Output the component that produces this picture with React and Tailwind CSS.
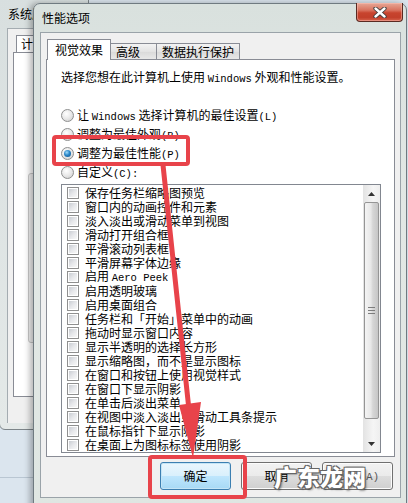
import React from "react";

const M = ({ children }) => (
  <span className="font-['Liberation_Mono',monospace] text-[10.5px]">{children}</span>
);

const items = [
  "保存任务栏缩略图预览",
  "窗口内的动画控件和元素",
  "淡入淡出或滑动菜单到视图",
  "滑动打开组合框",
  "平滑滚动列表框",
  "平滑屏幕字体边缘",
  "AERO",
  "启用透明玻璃",
  "启用桌面组合",
  "任务栏和「开始」菜单中的动画",
  "拖动时显示窗口内容",
  "显示半透明的选择长方形",
  "显示缩略图，而不是显示图标",
  "在窗口和按钮上使用视觉样式",
  "在窗口下显示阴影",
  "在单击后淡出菜单",
  "在视图中淡入淡出或滑动工具条提示",
  "在鼠标指针下显示阴影",
  "在桌面上为图标标签使用阴影",
];

function Radio({ checked, children }) {
  return (
    <div className="h-[19px] flex items-center pl-[14px]">
      <span className="w-[13px] h-[13px] rounded-full border border-[#8e8f8f] bg-[radial-gradient(circle_at_40%_35%,#ffffff_0%,#e8e8e8_50%,#c9c9c9_100%)] flex items-center justify-center shrink-0">
        {checked && (
          <span className="w-[7px] h-[7px] rounded-full bg-[radial-gradient(circle_at_40%_35%,#9fdcfb_0%,#2a86c8_45%,#0b4f86_100%)]" />
        )}
      </span>
      <span className="ml-[3px] leading-[14px]">{children}</span>
    </div>
  );
}

function Check({ children }) {
  return (
    <div className="h-[14px] flex items-center pl-[5px] shrink-0">
      <span className="w-[12px] h-[12px] border border-[#8f8f8f] bg-white p-[1px] shrink-0">
        <span className="block w-full h-full bg-[linear-gradient(135deg,#c9ccd2_0%,#e6e7ea_50%,#f8f8f8_100%)]" />
      </span>
      <span className="ml-[6px] leading-[14px] whitespace-nowrap">{children}</span>
    </div>
  );
}

function Btn({ children, primary }) {
  return (
    <div
      className={
        "w-[71px] h-[28px] rounded-[3px] border flex items-center justify-center " +
        (primary
          ? "border-[#3c7fb1] bg-[linear-gradient(to_bottom,#eaf6fd_0%,#d9f0fc_50%,#bee6fd_51%,#a7d9f5_100%)] shadow-[inset_0_0_0_1px_#c4e5f6]"
          : "border-[#707070] bg-[linear-gradient(to_bottom,#f2f2f2_0%,#ebebeb_50%,#dddddd_51%,#cfcfcf_100%)] shadow-[inset_0_0_0_1px_#fcfcfc]")
      }
    >
      {children}
    </div>
  );
}

export default function App() {
  return (
    <div className="relative w-[408px] h-[503px] overflow-hidden bg-[#dbe5ee] text-[12px] text-black font-['Noto_Sans_CJK_SC',sans-serif]">
      {/* desktop line */}
      <div className="absolute left-0 top-[477px] w-[40px] h-px bg-[#b9c6d2]" />

      {/* background window */}
      <div className="absolute left-[-1px] top-[-6px] w-[90px] h-[436px] rounded-b-[6px] border border-[#7d8589] bg-[linear-gradient(to_bottom,#d8dfdf,#e4e9e8)]">
        <div className="pl-[8px] pt-[12px] leading-[14px]">系统属性</div>
        <div className="absolute left-[7px] top-[33px] right-0 bottom-[6px] bg-[#f0f0f0] border-l border-t border-[#a4acb1]">
          <div className="absolute left-[8px] top-[6px] h-[18px] px-[4px] bg-white border border-b-0 border-[#898c95] leading-[16px]">
            计算机名
          </div>
          <div className="absolute left-[5px] top-[23px] right-0 h-[345px] bg-white border border-[#898c95]">
            <div className="absolute left-[14px] top-[120px] w-[20px] h-[170px] rounded-[3px] border border-[#c9c9c9] bg-[#f2f2f2]" />
          </div>
        </div>
      </div>

      {/* dialog */}
      <div className="absolute left-[33px] top-[3px] w-[374px] h-[510px] rounded-t-[7px] border border-[#6f7a80] bg-[linear-gradient(to_bottom,#d9e1de_0%,#e2e8e5_40%,#dfe6e2_100%)] shadow-[-3px_0_6px_rgba(0,0,0,0.3)] flex flex-col">
        <div className="relative h-[28px] flex items-center pl-[8px] shrink-0">
          <span className="leading-[14px]">性能选项</span>
          <div className="absolute right-[3px] top-[-1px] w-[47px] h-[19px] rounded-b-[4px] border border-t-0 border-[#5a2a22] bg-[linear-gradient(to_bottom,#e7a897_0%,#d9735f_40%,#c8442e_55%,#c23f2a_80%,#d6634c_100%)] flex items-center justify-center shadow-[inset_0_0_0_1px_rgba(255,200,190,0.45)]">
            <svg width="14" height="11" viewBox="0 0 14 11">
              <path d="M2.5 1.5 L11.5 9.5 M11.5 1.5 L2.5 9.5" stroke="#3a3a3a" strokeWidth="4.2" strokeLinecap="round" />
              <path d="M2.5 1.5 L11.5 9.5 M11.5 1.5 L2.5 9.5" stroke="#ffffff" strokeWidth="2.4" strokeLinecap="round" />
            </svg>
          </div>
        </div>

        <div className="ml-[6px] mr-[5px] h-[466px] bg-[#f0f0f0] border border-[#9aa3a9] flex flex-col shrink-0">
          {/* tabs */}
          <div className="mt-[6px] ml-[6px] h-[20px] flex items-end relative z-10">
            <div className="h-[21px] -mb-px px-[7px] bg-white border border-b-0 border-[#898c95] flex items-start pt-[3px] leading-[14px]">
              视觉效果
            </div>
            <div className="h-[16px] w-[46px] pl-[5px] border border-l-0 border-b-0 border-[#898c95] bg-[linear-gradient(to_bottom,#f3f3f3,#e3e3e3_50%,#d9d9d9_51%,#e8e8e8)] leading-[15px]">
              高级
            </div>
            <div className="h-[16px] w-[83px] pl-[5px] border border-l-0 border-b-0 border-[#898c95] bg-[linear-gradient(to_bottom,#f3f3f3,#e3e3e3_50%,#d9d9d9_51%,#e8e8e8)] leading-[15px]">
              数据执行保护
            </div>
          </div>

          {/* panel */}
          <div className="mx-[5px] h-[398px] bg-white border border-[#898c95] flex flex-col">
            <div className="mt-[10px] pl-[14px] leading-[14px] whitespace-nowrap">
              选择您想在此计算机上使用 <M>Windows</M> 外观和性能设置。
            </div>
            <div className="mt-[20px] flex flex-col">
              <Radio>
                让 <M>Windows</M> 选择计算机的最佳设置<M>(L)</M>
              </Radio>
              <Radio>
                调整为最佳外观<M>(B)</M>
              </Radio>
              <Radio checked>
                调整为最佳性能<M>(P)</M>
              </Radio>
              <Radio>
                自定义<M>(C):</M>
              </Radio>
            </div>
            <div className="mt-[2px] ml-[14px] w-[320px] h-[269px] border border-[#828790] flex">
              <div className="flex-1 pt-px flex flex-col overflow-hidden">
                {items.map((t, i) => (
                  <Check key={i}>
                    {t === "AERO" ? (
                      <>
                        启用 <M>Aero Peek</M>
                      </>
                    ) : (
                      t
                    )}
                  </Check>
                ))}
              </div>
              <div className="w-[17px] flex flex-col bg-[linear-gradient(to_right,#e3e3e3,#f5f5f5_60%,#eeeeee)]">
                <div className="h-[17px] flex items-center justify-center">
                  <svg width="7" height="4" viewBox="0 0 7 4">
                    <path d="M0 4 L3.5 0 L7 4 Z" fill="#333" />
                  </svg>
                </div>
                <div className="mx-px h-[217px] rounded-[2px] border border-[#959595] bg-[linear-gradient(to_right,#f4f4f4_0%,#e8e8e8_45%,#d6d6d6_60%,#c6c6c6_100%)] flex flex-col items-center justify-center gap-[2px]">
                  <span className="block w-[7px] h-px bg-[#7d7d7d]" />
                  <span className="block w-[7px] h-px bg-[#7d7d7d]" />
                  <span className="block w-[7px] h-px bg-[#7d7d7d]" />
                </div>
                <div className="flex-1" />
                <div className="h-[17px] flex items-center justify-center">
                  <svg width="7" height="4" viewBox="0 0 7 4">
                    <path d="M0 0 L7 0 L3.5 4 Z" fill="#333" />
                  </svg>
                </div>
              </div>
            </div>
          </div>

          {/* buttons */}
          <div className="mt-[5px] mr-[7px] flex justify-end gap-[10px]">
            <Btn primary>确定</Btn>
            <Btn>取消</Btn>
            <Btn>
              <span className="text-[#555]">
                应用<M>(A)</M>
              </span>
            </Btn>
          </div>
        </div>
      </div>

      {/* annotations */}
      <svg className="absolute inset-0 pointer-events-none" width="408" height="503" viewBox="0 0 408 503">
        <rect x="54" y="137" width="134" height="27" rx="2" fill="none" stroke="#e8434a" strokeWidth="4" />
        <path d="M163 165 L189 410" stroke="#e8434a" strokeWidth="5" strokeLinecap="round" />
        <path d="M179 405 L201 402 L193 458 Z" fill="#e8434a" />
        <rect x="150" y="457" width="95" height="40" rx="2" fill="none" stroke="#e8434a" strokeWidth="4" />
      </svg>

      {/* watermark */}
      <div className="absolute left-[274px] top-[461px] text-[23px] font-black tracking-[0px] text-white leading-[30px] [text-shadow:-1px_-1px_0_#666,1px_-1px_0_#666,-1px_1px_0_#666,1px_1px_0_#666,2px_2px_2px_rgba(0,0,0,0.35)]">
        广东龙网
      </div>
    </div>
  );
}
